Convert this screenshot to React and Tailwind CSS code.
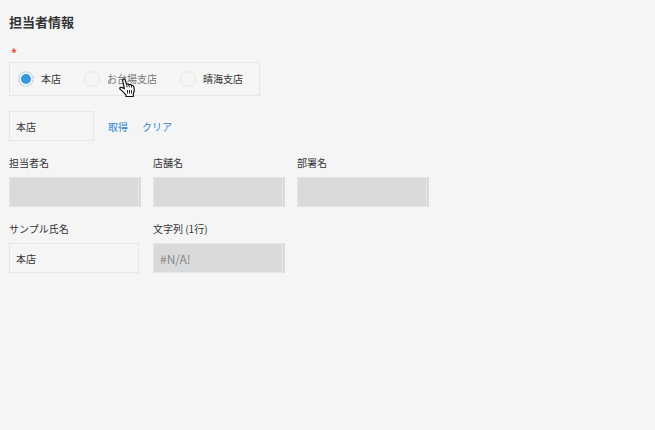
import React, { useState } from "react";

const branches = [
  { id: "honten", name: "本店", labelClass: "text-[#333]" },
  { id: "odaiba", name: "お台場支店", labelClass: "text-[#777]" },
  { id: "harumi", name: "晴海支店", labelClass: "text-[#333]" },
];

function HandCursor() {
  return (
    <svg
      className="absolute left-3 top-[7px] pointer-events-none"
      width="17"
      height="20"
      viewBox="0 0 17 20"
      aria-hidden="true"
    >
      <path
        d="M3.500 2C3.500.6 5.800.6 6.200 2l1.300 4.300c.6-.8 2.100-.5 2.400.5.800-.7 2.100-.2 2.400.7.900-.5 2.200.1 2.500 1.300l.5 3.200c.1 1.600-.9 2.600-1 4.200v2.300H7v-1.700C5.500 15.200 3.500 13.200 1.300 11.400.3 10.400 1 9 2.400 9.300l3 1.300z"
        fill="#fff"
        stroke="#111"
        strokeWidth="1.2"
        strokeLinejoin="round"
      />
      <path
        d="M7.500 6.300l.7 3M9.900 6.800l.5 2.600M12.300 7.500l.4 2.200M8.500 12v3.500M10.500 12v3.500M12.500 12v3.500"
        fill="none"
        stroke="#111"
        strokeWidth="0.9"
      />
    </svg>
  );
}

function Field({ id, label, value, disabled }) {
  return (
    <div className="w-[132px]">
      <label htmlFor={id} className="block h-4 text-[10px] leading-4">
        {label}
      </label>
      {disabled ? (
        <div className="mt-[6px] border-r-2 border-[#d9dadc]">
          <input
            id={id}
            type="text"
            defaultValue={value}
            disabled
            className="block w-full h-[30px] px-[6px] border border-[#e3e7e8] bg-[#d9dadc] text-[12px] text-[#888]"
          />
        </div>
      ) : (
        <div className="mt-[6px] pr-[2px]">
          <input
            id={id}
            type="text"
            defaultValue={value}
            className="block w-full h-[30px] px-[6px] border border-[#e3e7e8] bg-[#f5f5f5] text-[10px]"
          />
        </div>
      )}
    </div>
  );
}

export default function App() {
  const [branch, setBranch] = useState("honten");

  return (
    <main className="min-h-screen bg-[#f5f5f5] px-[9px] pt-3 text-[#333] font-['Noto_Sans_CJK_JP',sans-serif]">
      <h1 className="text-[13px] leading-5 font-bold">担当者情報</h1>

      <fieldset className="mt-3">
        <legend className="px-[2px] text-[12px] leading-[18px] font-bold text-[#e74c3c]">
          *
        </legend>
        <div className="flex w-max h-[34px] items-center gap-[23px] border border-[#e3e7e8] pl-2 pr-4">
          {branches.map((b) => (
            <label
              key={b.id}
              className={`relative flex items-center gap-[7px] text-[10px] leading-4 ${b.labelClass}`}
            >
              <input
                type="radio"
                name="branch"
                value={b.id}
                checked={branch === b.id}
                onChange={() => setBranch(b.id)}
                className="appearance-none size-4 rounded-full border border-[#e3e7e8] bg-[#f5f5f5] checked:bg-[#3498db] checked:shadow-[inset_0_0_0_2px_#f5f5f5]"
              />
              <span className="relative">
                {b.name}
                {b.id === "odaiba" && <HandCursor />}
              </span>
            </label>
          ))}
        </div>
      </fieldset>

      <div className="mt-[15px] flex items-center gap-[14px] text-[10px]">
        <input
          type="text"
          aria-label="検索"
          defaultValue="本店"
          className="w-[85px] h-[30px] px-[6px] border border-[#e3e7e8] bg-[#f5f5f5]"
        />
        <button type="button" className="text-[#2f86d0]">
          取得
        </button>
        <button type="button" className="text-[#2f86d0]">
          クリア
        </button>
      </div>

      <div className="mt-[14px] flex flex-wrap gap-3">
        <Field id="tantou" label="担当者名" value="" disabled />
        <Field id="tenpo" label="店舗名" value="" disabled />
        <Field id="busho" label="部署名" value="" disabled />
      </div>

      <div className="mt-[14px] flex flex-wrap gap-3">
        <Field id="sample" label="サンプル氏名" value="本店" />
        <Field id="mojiretsu" label="文字列 (1行)" value="#N/A!" disabled />
      </div>
    </main>
  );
}
